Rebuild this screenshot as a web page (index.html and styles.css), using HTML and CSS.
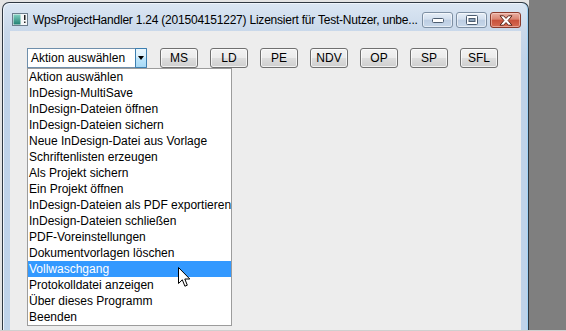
FILE: index.html
```html
<!DOCTYPE html>
<html lang="de">
<head>
<meta charset="utf-8">
<title>WpsProjectHandler</title>
<link rel="stylesheet" href="styles.css">
</head>
<body>
<div class="screen">
  <div class="winarea">
    <div class="window">
      <div class="titlebar">
        <svg class="appicon" width="16" height="13" viewBox="0 0 16 13">
          <defs>
            <linearGradient id="teal" x1="0" y1="0" x2="0" y2="1">
              <stop offset="0" stop-color="#7fd0c0"/>
              <stop offset="1" stop-color="#1f7f72"/>
            </linearGradient>
          </defs>
          <rect x="0.5" y="0.5" width="15" height="12" fill="#f4f6f8" stroke="#6b7c8c"/>
          <rect x="1.5" y="1.5" width="7" height="10" fill="url(#teal)"/>
          <rect x="12" y="2" width="1.5" height="5" fill="#222"/>
          <rect x="12" y="8.5" width="1.5" height="1.5" fill="#222"/>
        </svg>
        <span class="title">WpsProjectHandler 1.24 (201504151227) Lizensiert für Test-Nutzer, unbe...</span>
        <div class="caption">
          <div class="cbtn">
            <svg width="12" height="6" viewBox="0 0 12 6"><rect x="0.5" y="1.5" width="11" height="4" rx="1" fill="#fff" stroke="#4c5d70"/></svg>
          </div>
          <div class="cbtn">
            <svg width="12" height="10" viewBox="0 0 12 10"><rect x="0.5" y="0.5" width="11" height="9" rx="1" fill="#fff" stroke="#4c5d70"/><rect x="3" y="3.5" width="6" height="3" fill="#8ea5bc" stroke="#4c5d70" stroke-width="1"/></svg>
          </div>
          <div class="cbtn close">
            <svg width="16" height="11" viewBox="0 0 16 11"><path d="M2 0.8 L5.6 0.8 L8 3.4 L10.4 0.8 L14 0.8 L10.1 5.5 L14 10.2 L10.4 10.2 L8 7.6 L5.6 10.2 L2 10.2 L5.9 5.5 Z" fill="#fff" stroke="#5a2418" stroke-width="1" stroke-linejoin="round"/></svg>
          </div>
        </div>
      </div>
      <div class="client">
        <div class="toolbar">
          <div class="combo">
            <span class="combo-text">Aktion auswählen</span>
            <div class="combo-arrow"><span class="tri"></span></div>
          </div>
          <div class="btns">
            <div class="btn">MS</div>
            <div class="btn">LD</div>
            <div class="btn">PE</div>
            <div class="btn">NDV</div>
            <div class="btn">OP</div>
            <div class="btn">SP</div>
            <div class="btn">SFL</div>
          </div>
        </div>
        <div class="list">
          <div class="item">Aktion auswählen</div>
          <div class="item">InDesign-MultiSave</div>
          <div class="item">InDesign-Dateien öffnen</div>
          <div class="item">InDesign-Dateien sichern</div>
          <div class="item">Neue InDesign-Datei aus Vorlage</div>
          <div class="item">Schriftenlisten erzeugen</div>
          <div class="item">Als Projekt sichern</div>
          <div class="item">Ein Projekt öffnen</div>
          <div class="item">InDesign-Dateien als PDF exportieren</div>
          <div class="item">InDesign-Dateien schließen</div>
          <div class="item">PDF-Voreinstellungen</div>
          <div class="item">Dokumentvorlagen löschen</div>
          <div class="item selected">Vollwaschgang</div>
          <div class="item">Protokolldatei anzeigen</div>
          <div class="item">Über dieses Programm</div>
          <div class="item">Beenden</div>
        </div>
      </div>
    </div>
  </div>
  <div class="desk"></div>
</div>
<svg class="cursor" width="13" height="21" viewBox="0 0 13 21">
  <path d="M0.5 0.5 L0.5 16.5 L4.3 12.8 L6.9 19.2 L9.3 18.2 L6.8 12 L11.8 12 Z" fill="#fff" stroke="#000" stroke-width="1" stroke-linejoin="miter"/>
</svg>
</body>
</html>
```

FILE: styles.css
```css
* { box-sizing: border-box; }

html, body {
  margin: 0;
  padding: 0;
}

body {
  width: 566px;
  height: 331px;
  overflow: hidden;
  background: #cfcfcf;
  font-family: "Segoe UI", "Liberation Sans", Arial, sans-serif;
  font-size: 12px;
  color: #000;
  position: relative;
}

.screen {
  display: flex;
  height: 330px;
  overflow: hidden;
}

.winarea {
  width: 529px;
  padding: 2px 0 0 2px;
  background: #e4e4e4;
  flex: none;
}

.desk {
  flex: 1;
  background: #7f7f7f;
}

.window {
  width: 527px;
  height: 340px;
  border: 1px solid #2f3842;
  border-bottom: none;
  border-radius: 7px 7px 0 0;
  background: linear-gradient(to bottom, #dbe6f3 0px, #c9d8ea 28px, #bfd2e8 60px, #bfd3ea 100%);
  box-shadow: inset -1px 0 0 #9fd2f6, inset 1px 1px 0 #eef4fb;
  display: flex;
  flex-direction: column;
}

.titlebar {
  height: 28px;
  display: flex;
  align-items: flex-start;
  padding: 9px 0 0 9px;
  flex: none;
}

.appicon {
  margin-top: 1px;
  flex: none;
}

.title {
  margin-left: 5px;
  line-height: 17px;
  white-space: nowrap;
  letter-spacing: -0.22px;
  color: #000;
  flex: 0 1 auto;
  overflow: hidden;
}

.caption {
  margin-left: auto;
  margin-right: 7px;
  display: flex;
  gap: 3px;
  flex: none;
}

.cbtn {
  width: 31px;
  height: 16px;
  border: 1px solid #7d8fa3;
  border-radius: 3px;
  background: linear-gradient(to bottom, #e6eef7 0%, #d2dfee 45%, #bccde2 50%, #c8d8ea 100%);
  box-shadow: inset 0 0 0 1px rgba(255,255,255,0.55);
  display: flex;
  align-items: center;
  justify-content: center;
}

.cbtn.close {
  border-color: #8a3a2c;
  background: linear-gradient(to bottom, #eab0a4 0%, #d98370 45%, #c8503a 50%, #d66b52 100%);
  box-shadow: inset 0 0 0 1px rgba(255,220,210,0.5);
}

.client {
  flex: 1;
  margin: 0 7px 0 7px;
  background: #ededed;
  padding: 17px 0 0 17px;
}

.toolbar {
  display: flex;
  align-items: flex-start;
}

.combo {
  width: 120px;
  height: 20px;
  border: 1px solid #6f8fab;
  background: #fff;
  display: flex;
  align-items: stretch;
}

.combo-text {
  flex: 1;
  padding-left: 3px;
  line-height: 18px;
  white-space: nowrap;
  overflow: hidden;
}

.combo-arrow {
  width: 12px;
  margin: -1px -1px -1px 0;
  border: 1px solid #3c7fb1;
  border-radius: 0 1px 1px 0;
  background: linear-gradient(to bottom, #eaf6fd 0%, #d9f0fc 45%, #bee6fd 50%, #a7d9f5 100%);
  display: flex;
  align-items: center;
  justify-content: center;
}

.tri {
  width: 0;
  height: 0;
  border-left: 3.5px solid transparent;
  border-right: 3.5px solid transparent;
  border-top: 4px solid #000;
}

.btns {
  display: flex;
  gap: 12px;
  margin-left: 13px;
}

.btn {
  width: 38px;
  height: 20px;
  border: 1px solid #707070;
  border-radius: 3px;
  background: linear-gradient(to bottom, #f2f2f2 0%, #ebebeb 50%, #dddddd 50%, #cfcfcf 100%);
  box-shadow: inset 0 0 0 1px rgba(255,255,255,0.7);
  text-align: center;
  line-height: 18px;
}

.list {
  width: 205px;
  margin-top: 0;
  border: 1px solid #9c9c9c;
  background: #fff;
  padding: 0;
}

.item {
  height: 16px;
  line-height: 17px;
  padding-left: 1px;
  white-space: nowrap;
}

.item.selected {
  background: #3399ff;
  color: #fff;
}

.cursor {
  position: absolute;
  left: 178px;
  top: 267px;
}
```
